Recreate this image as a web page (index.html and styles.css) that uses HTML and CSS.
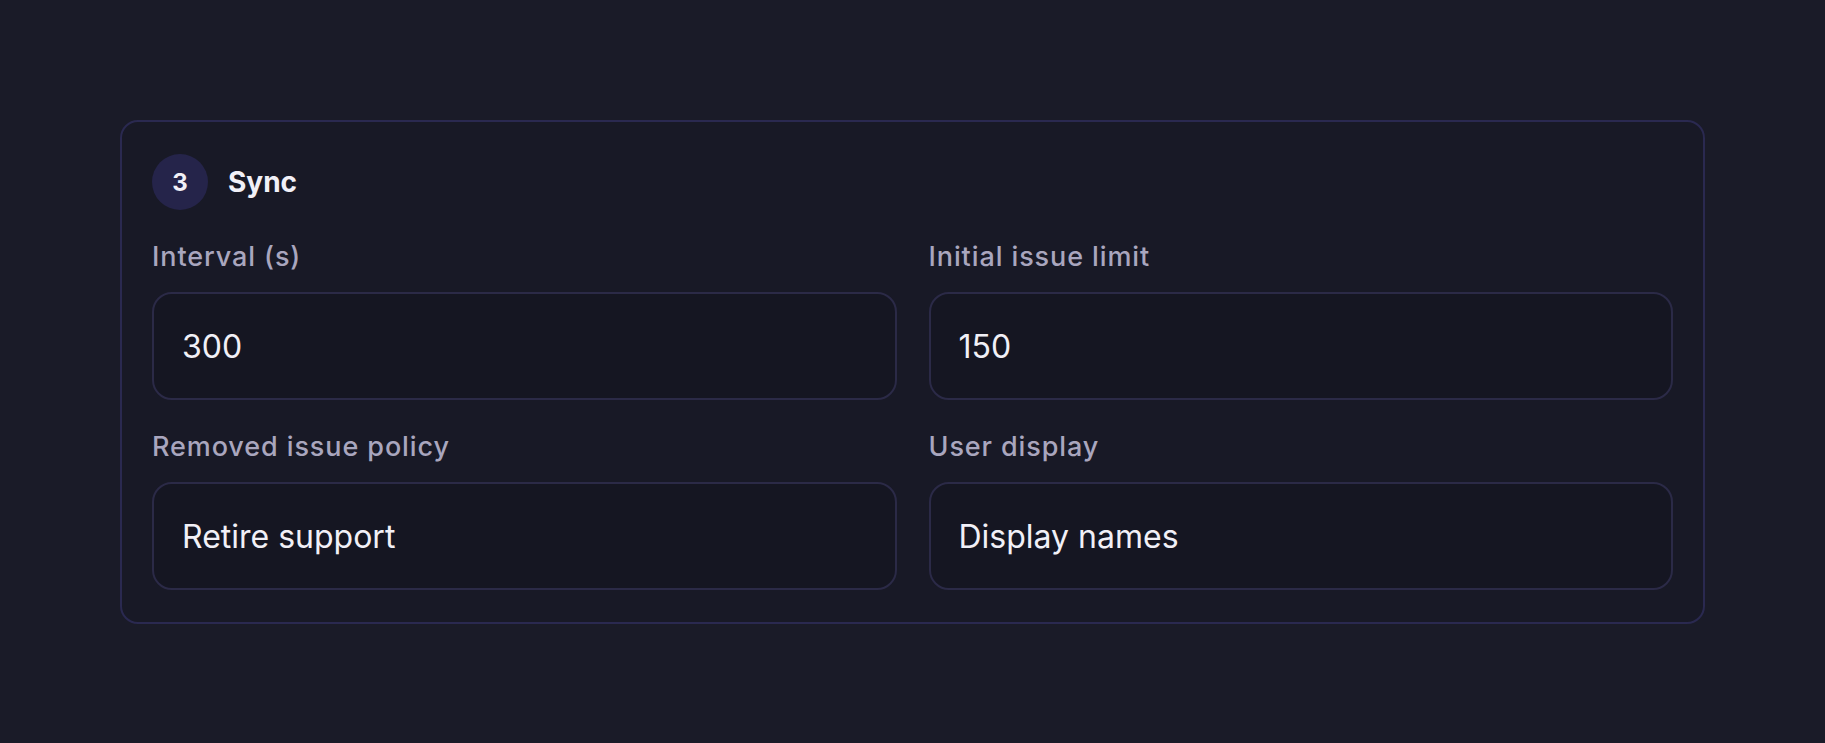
FILE: index.html
```html
<!DOCTYPE html>
<html lang="en">

<head>
  <meta charset="UTF-8">
  <meta name="viewport" content="width=device-width, initial-scale=1.0">
  <title>sync settings</title>

  <link rel="stylesheet" href="styles.css">

</head>

<body>
  <section class="step-card">
    <div class="step-head">
      <span class="step-num">3</span>
      <h2 class="step-title">Sync</h2>
    </div>

    <div class="field-grid">
      <label class="field">
        <span class="field-label">Interval (s)</span>
        <input class="field-input" type="text" value="300">
      </label>
      <label class="field">
        <span class="field-label">Initial issue limit</span>
        <input class="field-input" type="text" value="150">
      </label>
      <label class="field">
        <span class="field-label">Removed issue policy</span>
        <input class="field-input" type="text" value="Retire support">
      </label>
      <label class="field">
        <span class="field-label">User display</span>
        <input class="field-input" type="text" value="Display names">
      </label>
    </div>
  </section>
</body>

</html>
```

FILE: styles.css
```css
* {
  box-sizing: border-box;
}

body {
  margin: 0;
  padding: 120px;
  background: #1a1b28;
  font-family: Inter, "Noto Sans", sans-serif;
  color: #f1f0f7;
}

/* 外框卡片 */
.step-card {
  border: 2px solid #2a2950;
  border-radius: 18px;
  background: #181926;
  padding: 30px 30px 32px;
}

.step-head {
  display: flex;
  align-items: center;
  gap: 20px;
  height: 60px;
}

.step-num {
  display: flex;
  align-items: center;
  justify-content: center;
  width: 56px;
  height: 56px;
  border-radius: 50%;
  background: #25244a;
  font-size: 24px;
  font-weight: 700;
}

.step-title {
  margin: 0;
  font-size: 28px;
  font-weight: 700;
}

/* 两列表单 */
.field-grid {
  display: grid;
  grid-template-columns: 1fr 1fr;
  column-gap: 32px;
  row-gap: 29px;
  margin-top: 27px;
}

.field {
  display: flex;
  flex-direction: column;
  gap: 17px;
}

.field-label {
  font-size: 27px;
  line-height: 36px;
  font-weight: 500;
  letter-spacing: 0.9px;
  color: #a9a6be;
}

.field-input {
  height: 108px;
  padding: 0 28px;
  border: 2px solid #2b2a47;
  border-radius: 20px;
  background: #151622;
  color: #f1f0f7;
  font-family: inherit;
  font-size: 32px;
  outline: none;
}
```
